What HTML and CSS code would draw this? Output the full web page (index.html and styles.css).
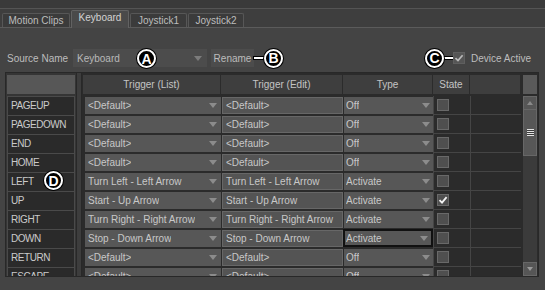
FILE: index.html
```html
<!DOCTYPE html>
<html>
<head>
<meta charset="utf-8">
<link rel="stylesheet" href="styles.css">
</head>
<body>
<div class="topstrip"></div>
<div class="tabbar">
  <div class="tab w1">Motion Clips</div>
  <div class="tab active w2">Keyboard</div>
  <div class="tab w3">Joystick1</div>
  <div class="tab w4">Joystick2</div>
</div>
<div class="toolbar">
  <span class="lbl">Source Name</span>
  <div class="combo src"><span class="t">Keyboard</span><span class="arr"></span><span class="callout ca">A</span></div>
  <button class="btn">Rename</button>
  <span class="leader"></span><span class="callout">B</span>
  <div class="devgroup">
    <span class="callout">C</span><span class="leader lc"></span>
    <span class="box dev"><svg width="10" height="10" viewBox="0 0 10 10"><path d="M1.5 5.2 L4 7.6 L8.6 2.2" fill="none" stroke="#b9b9b9" stroke-width="1.7"/></svg></span>
    <span class="devlbl">Device Active</span>
  </div>
</div>
<div class="frame">
  <div class="rowheads">
    <div class="rh-head"></div>
    <div class="rh">PAGEUP</div>
    <div class="rh">PAGEDOWN</div>
    <div class="rh">END</div>
    <div class="rh">HOME</div>
    <div class="rh d-host">LEFT<span class="callout cd">D</span></div>
    <div class="rh">UP</div>
    <div class="rh">RIGHT</div>
    <div class="rh">DOWN</div>
    <div class="rh">RETURN</div>
    <div class="rh">ESCAPE</div>
  </div>
  <div class="split"></div>
  <div class="datagrid">
    <div class="gbody">
      <div class="hrow">
        <div class="h">Trigger (List)</div>
        <div class="h">Trigger (Edit)</div>
        <div class="h">Type</div>
        <div class="h">State</div>
        <div class="h"></div>
      </div>
      <div class="row">
        <div class="c dd"><span class="t">&lt;Default&gt;</span><span class="arr"></span></div>
        <div class="c ed">&lt;Default&gt;</div>
        <div class="c dd ty"><span class="t">Off</span><span class="arr"></span></div>
        <div class="c st"><span class="box"></span></div>
        <div class="c bl"></div>
      </div>
      <div class="row">
        <div class="c dd"><span class="t">&lt;Default&gt;</span><span class="arr"></span></div>
        <div class="c ed">&lt;Default&gt;</div>
        <div class="c dd ty"><span class="t">Off</span><span class="arr"></span></div>
        <div class="c st"><span class="box"></span></div>
        <div class="c bl"></div>
      </div>
      <div class="row">
        <div class="c dd"><span class="t">&lt;Default&gt;</span><span class="arr"></span></div>
        <div class="c ed">&lt;Default&gt;</div>
        <div class="c dd ty"><span class="t">Off</span><span class="arr"></span></div>
        <div class="c st"><span class="box"></span></div>
        <div class="c bl"></div>
      </div>
      <div class="row">
        <div class="c dd"><span class="t">&lt;Default&gt;</span><span class="arr"></span></div>
        <div class="c ed">&lt;Default&gt;</div>
        <div class="c dd ty"><span class="t">Off</span><span class="arr"></span></div>
        <div class="c st"><span class="box"></span></div>
        <div class="c bl"></div>
      </div>
      <div class="row">
        <div class="c dd"><span class="t">Turn Left - Left Arrow</span><span class="arr"></span></div>
        <div class="c ed">Turn Left - Left Arrow</div>
        <div class="c dd ty"><span class="t">Activate</span><span class="arr"></span></div>
        <div class="c st"><span class="box"></span></div>
        <div class="c bl"></div>
      </div>
      <div class="row">
        <div class="c dd"><span class="t">Start - Up Arrow</span><span class="arr"></span></div>
        <div class="c ed">Start - Up Arrow</div>
        <div class="c dd ty"><span class="t">Activate</span><span class="arr"></span></div>
        <div class="c st"><span class="box"><svg width="10" height="10" viewBox="0 0 10 10"><path d="M1.5 5.2 L4 7.6 L8.6 2.2" fill="none" stroke="#f4f4f4" stroke-width="1.8"/></svg></span></div>
        <div class="c bl"></div>
      </div>
      <div class="row">
        <div class="c dd"><span class="t">Turn Right - Right Arrow</span><span class="arr"></span></div>
        <div class="c ed">Turn Right - Right Arrow</div>
        <div class="c dd ty"><span class="t">Activate</span><span class="arr"></span></div>
        <div class="c st"><span class="box"></span></div>
        <div class="c bl"></div>
      </div>
      <div class="row">
        <div class="c dd"><span class="t">Stop - Down Arrow</span><span class="arr"></span></div>
        <div class="c ed">Stop - Down Arrow</div>
        <div class="c dd ty sel"><span class="t">Activate</span><span class="arr"></span></div>
        <div class="c st"><span class="box"></span></div>
        <div class="c bl"></div>
      </div>
      <div class="row">
        <div class="c dd"><span class="t">&lt;Default&gt;</span><span class="arr"></span></div>
        <div class="c ed">&lt;Default&gt;</div>
        <div class="c dd ty"><span class="t">Off</span><span class="arr"></span></div>
        <div class="c st"><span class="box"></span></div>
        <div class="c bl"></div>
      </div>
      <div class="row">
        <div class="c dd"><span class="t">&lt;Default&gt;</span><span class="arr"></span></div>
        <div class="c ed">&lt;Default&gt;</div>
        <div class="c dd ty"><span class="t">Off</span><span class="arr"></span></div>
        <div class="c st"><span class="box"></span></div>
        <div class="c bl"></div>
      </div>
    </div>
    <div class="vs">
      <div class="vs-head"></div>
      <div class="vs-btn"><span class="uparr"></span></div>
      <div class="vs-thumb"><span class="grip"></span></div>
      <div class="vs-track"></div>
      <div class="vs-btn"><span class="arr"></span></div>
    </div>
  </div>
</div>
</body>
</html>
```

FILE: styles.css
```css
* { box-sizing: border-box; margin: 0; padding: 0; }
html, body { width: 545px; height: 290px; overflow: hidden; }
body {
  background: #444444;
  font-family: "Liberation Sans", Arial, sans-serif;
  font-size: 10px;
  color: #c6c6c6;
}

.topstrip { height: 8px; background: #3a3a3a; }

.tabbar {
  height: 20px;
  display: flex;
  align-items: flex-end;
  gap: 1px;
  padding-left: 2px;
  background: #3e3e3e;
  border-top: 1px solid #545454;
  border-bottom: 1px solid #5b5b5b;
}
.tab {
  height: 14px;
  line-height: 13px;
  text-align: center;
  background: #3b3b3b;
  border: 1px solid #575757;
  border-bottom: none;
  border-radius: 2px 2px 0 0;
  color: #bdbdbd;
}
.tab.active {
  height: 18px;
  line-height: 14px;
  margin-bottom: -1px;
  background: #4a4a4a;
  border-color: #626262;
  color: #d2d2d2;
}
.w1 { width: 68px; }
.w2 { width: 58px; }
.w3 { width: 57px; }
.w4 { width: 56px; }

.toolbar {
  display: flex;
  align-items: center;
  height: 18px;
  margin: 21px 0 5px 0;
  padding: 0 14px 0 7px;
}
.lbl { width: 66px; color: #bdbdbd; }
.combo {
  position: relative;
  height: 18px;
  display: flex;
  align-items: center;
  justify-content: space-between;
  background: #4c4c4c;
  color: #b8b8b8;
}
.combo.src { width: 134px; padding: 0 5px 0 4px; }
.arr {
  width: 0; height: 0;
  border-left: 4px solid transparent;
  border-right: 4px solid transparent;
  border-top: 5px solid #8c8c8c;
  flex: none;
}
.combo .arr { border-top-color: #7c7c7c; }
.btn {
  margin-left: 4px;
  width: 43px;
  height: 18px;
  border: none;
  background: #4c4c4c;
  color: #bcbcbc;
  font: inherit;
}
.callout {
  width: 19px;
  height: 19px;
  flex: none;
  border-radius: 50%;
  background: #000;
  border: 2px solid #fff;
  box-shadow: 0 0 0 1px #000;
  color: #fff;
  font: bold 14px "Liberation Sans", Arial, sans-serif;
  display: flex;
  align-items: center;
  justify-content: center;
  line-height: 1;
  z-index: 2;
}
.callout.ca { position: absolute; left: 64px; top: 0; }
.leader {
  width: 10px;
  height: 2px;
  background: #fff;
  box-shadow: 0 0 0 1px #000;
  flex: none;
}
.devgroup { margin-left: auto; display: flex; align-items: center; }
.leader.lc { width: 9px; }
.box {
  width: 12px;
  height: 12px;
  flex: none;
  background: #4f4f4f;
  border: 1px solid #696969;
  display: flex;
  align-items: center;
  justify-content: center;
}
.box.dev { background: #555; border-color: #5f5f5f; }
.devlbl { margin-left: 6px; color: #bdbdbd; }

.frame {
  display: flex;
  margin-left: 5px;
  width: 534px;
  height: 205px;
  border: 1px solid #282828;
  background: #2b2b2b;
}
.rowheads {
  width: 70px;
  padding: 2px 1px 0 1px;
  background: #353535;
  overflow: hidden;
  flex: none;
}
.rh-head { height: 19px; background: #575757; margin-bottom: 2px; }
.rh {
  height: 19px;
  border: 1px solid #4a4a4a;
  border-bottom: none;
  background: #2a2a2a;
  padding-left: 3px;
  line-height: 17px;
  letter-spacing: -0.45px;
  color: #cacaca;
}
.d-host { position: relative; }
.callout.cd { position: absolute; left: 36px; top: -2px; letter-spacing: 0; }

.split {
  width: 6px;
  flex: none;
  background: #3d3d3d;
  border-left: 1px solid #282828;
  border-right: 1px solid #282828;
}
.datagrid {
  flex: 1;
  display: flex;
  padding: 2px 0 0 1px;
  background: #2b2b2b;
  overflow: hidden;
}
.gbody { flex: 1; overflow: hidden; }
.hrow, .row {
  display: grid;
  grid-template-columns: 138px 122px 90px 37px 51px;
  height: 19px;
}
.hrow { margin-bottom: 2px; }
.h {
  background: #3e3e3e;
  border-right: 1px solid #2b2b2b;
  display: flex;
  align-items: center;
  justify-content: center;
  color: #c4c4c4;
}
.c { white-space: nowrap; overflow: hidden; color: #c8c8c8; }
.c.dd {
  margin: 1px 0 1px 2px;
  background: #575757;
  display: flex;
  align-items: center;
  justify-content: space-between;
  padding: 0 4px 0 3px;
}
.c.ed {
  margin: 1px 0 1px 1px;
  background: #545454;
  border: 1px solid #676767;
  padding-left: 3px;
  line-height: 15px;
}
.c.ty { margin-left: 1px; padding: 0 3px 0 2px; }
.c.sel { margin: 0 0 1px 0; border: 2px solid #111; padding-left: 1px; }
.t { overflow: hidden; }
.c.st, .c.bl {
  background: #2b2b2b;
  border-bottom: 1px solid #454545;
  border-left: 1px solid #454545;
}
.c.st { display: flex; align-items: center; padding-left: 3px; }

.vs {
  width: 14px;
  flex: none;
  display: flex;
  flex-direction: column;
  margin-right: 1px;
}
.vs-head { height: 19px; background: #5a5a5a; margin-bottom: 2px; }
.vs-btn {
  height: 14px;
  background: #565656;
  border: 1px solid #676767;
  display: flex;
  align-items: center;
  justify-content: center;
}
.vs-btn .arr { border-left-width: 3px; border-right-width: 3px; border-top: 4px solid #9a9a9a; }
.uparr {
  width: 0; height: 0;
  border-left: 3px solid transparent;
  border-right: 3px solid transparent;
  border-bottom: 4px solid #8a8a8a;
}
.vs-thumb {
  height: 46px;
  background: #575757;
  border: 1px solid #676767;
  border-top: none;
  display: flex;
  align-items: center;
  justify-content: center;
}
.grip {
  width: 7px;
  height: 7px;
  background: repeating-linear-gradient(#e2e2e2 0 1px, #3a3a3a 1px 2px);
}
.vs-track { flex: 1; background: #3b3b3b; }
```
